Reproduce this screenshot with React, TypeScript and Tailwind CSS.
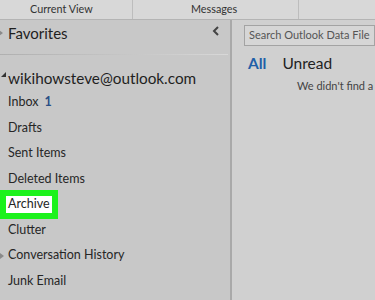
import React from "react";

const font = { fontFamily: 'Lato, "Noto Sans", sans-serif' };

function Item({ label, children }: { label: string; children?: React.ReactNode }) {
  return (
    <div className="h-[25.5px] flex items-center pl-[8px] text-[12.5px] text-[#262626]">
      {label}
      {children}
    </div>
  );
}

export default function App() {
  return (
    <div className="w-[375px] h-[300px] overflow-hidden bg-[#c9c9c9] flex flex-col" style={font}>
      {/* top bar */}
      <div className="h-[20px] flex bg-[#d8d8d8] border-b border-[#b4b4b4] text-[10.8px] text-[#333] shrink-0">
        <div className="w-[133px] flex items-center justify-start pl-[30px] border-r border-[#bdbdbd]">Current View</div>
        <div className="w-[166px] flex items-center justify-start pl-[58px] border-r border-[#bdbdbd]">Messages</div>
        <div className="flex-1"></div>
      </div>
      <div className="flex flex-1 min-h-0">
        {/* left pane */}
        <div className="w-[230px] shrink-0 bg-[#c8c8c8] flex flex-col">
          <div className="h-[34px] flex items-start pt-[4px] relative">
            <span className="absolute left-[-1px] top-[10px] w-0 h-0 border-y-[3px] border-y-transparent border-l-[4px] border-l-[#8a8a8a]"></span>
            <span className="pl-[8px] text-[15px] leading-[18px] text-[#1f1f1f]">Favorites</span>
            <svg className="absolute left-[212px] top-[6px]" width="8" height="10" viewBox="0 0 8 10">
              <path d="M6 1 L2 5 L6 9" stroke="#444" strokeWidth="2" fill="none" />
            </svg>
          </div>
          <div className="h-px w-[228px] bg-gradient-to-r from-[#b0b0b0] to-[#d8d8d8]"></div>
          <div className="h-[34px] flex items-end relative pb-[3px]">
            <span className="absolute left-[1px] top-[17px] w-0 h-0 border-b-[5px] border-l-[5px] border-l-transparent border-b-[#333]"></span>
            <span className="pl-[8px] text-[15.3px] text-[#1f1f1f] leading-none">wikihowsteve@outlook.com</span>
          </div>
          <div className="mt-[1px]">
            <Item label="Inbox">
              <span className="ml-[6px] font-bold text-[#2a4f86]">1</span>
            </Item>
            <Item label="Drafts" />
            <Item label="Sent Items" />
            <Item label="Deleted Items" />
            <div className="h-[25.5px] flex items-center">
              <div className="w-[58px] h-[29px] bg-[#1cf21c] flex items-center pl-[6px]">
                <span className="bg-white h-[17px] flex items-center px-[2px] text-[12.5px] text-[#262626]">Archive</span>
              </div>
            </div>
            <Item label="Clutter" />
            <div className="h-[25.5px] flex items-center pl-[8px] text-[12.5px] text-[#262626] relative">
              <span className="absolute left-[0px] top-[10px] w-0 h-0 border-y-[3px] border-y-transparent border-l-[4px] border-l-[#8a8a8a]"></span>
              Conversation History
            </div>
            <Item label="Junk Email" />
          </div>
        </div>
        {/* divider */}
        <div className="w-[2px] bg-[#a9a9a9] shrink-0"></div>
        {/* right pane */}
        <div className="flex-1 bg-[#d0d0d0] flex flex-col pl-[12px] pt-[5px]">
          <div className="h-[21px] border border-[#a3a3a3] bg-[#d6d6d6] flex items-center pl-[4px] text-[11px] text-[#555] whitespace-nowrap overflow-hidden">
            Search Outlook Data File
          </div>
          <div className="flex items-center mt-[7px] pl-[4px] h-[22px]">
            <span className="text-[15.5px] font-bold text-[#1f5fa8]">All</span>
            <span className="ml-[16px] text-[15.5px] text-[#222]">Unread</span>
          </div>
          <div className="pl-[53px] mt-[3px] text-[11px] text-[#444] whitespace-nowrap">We didn't find a</div>
        </div>
      </div>
    </div>
  );
}
